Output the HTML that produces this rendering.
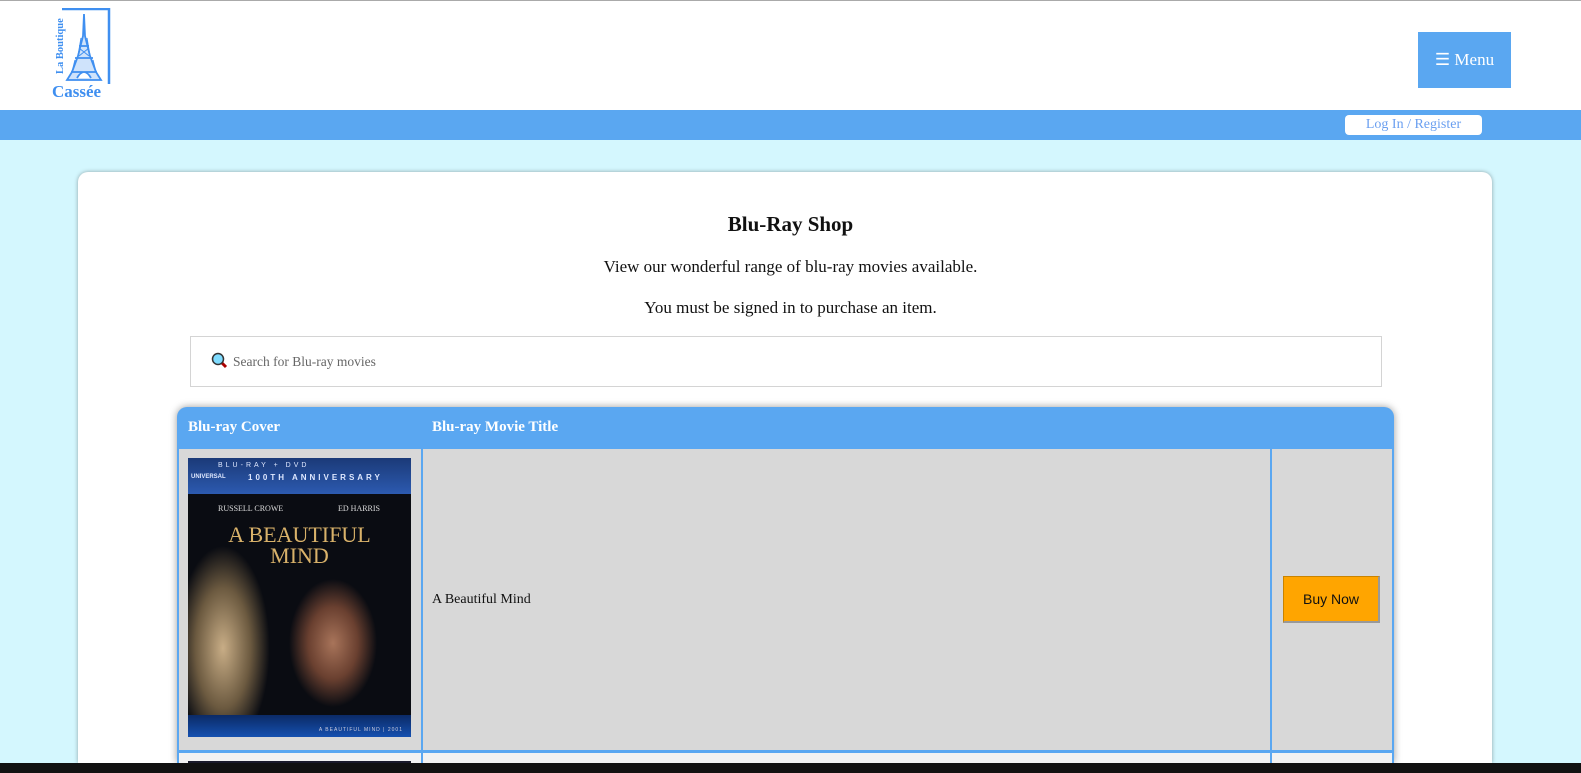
<!DOCTYPE html>
<html><head><meta charset="utf-8">
<style>
*{box-sizing:border-box;margin:0;padding:0}
html,body{width:1581px;height:773px;overflow:hidden}
body{background:#d4f7fe;font-family:"Liberation Serif",serif;position:relative}
.top{position:absolute;left:0;top:0;width:1581px;height:110px;background:#fff;border-top:1px solid #aaa}
.logo{position:absolute;left:50px;top:7px;width:62px;height:92px}
.menu{position:absolute;left:1418px;top:31px;width:93px;height:56px;background:#5aa7f1;color:#fff;font-size:17px;line-height:56px;text-align:center}
.bar{position:absolute;left:0;top:110px;width:1581px;height:30px;background:#5aa7f1}
.login{position:absolute;left:1345px;top:115px;width:137px;height:20px;background:#fff;border-radius:4px;color:#6a9ff0;font-size:14px;line-height:20px;text-align:center}
.card{position:absolute;left:78px;top:172px;width:1414px;height:591px;background:#fff;border-radius:10px 10px 0 0;box-shadow:0 0 4px rgba(0,0,0,.35)}
h1{position:absolute;left:0;width:100%;top:212px;text-align:center;font-size:21px;font-weight:bold;color:#111}
.p{position:absolute;left:0;width:100%;text-align:center;font-size:17px;color:#111}
.search{position:absolute;left:190px;top:336px;width:1192px;height:51px;border:1px solid #d4d4d4;background:#fff;font-size:13.5px;color:#666;line-height:49px;padding-left:42px}
.tbl{position:absolute;left:177px;top:407px;width:1217px;height:356px;border-radius:10px 10px 0 0;background:#5aa7f1;box-shadow:0 0 8px rgba(0,0,0,.4);overflow:hidden}
.th{position:absolute;top:12px;color:#fff;font-weight:bold;font-size:15px}
.cell{position:absolute;background:#d8d8d8}
.btn{position:absolute;left:1283px;top:576px;width:97px;height:47px;background:#ffa500;border:1px solid #c98300;border-right:2px solid #999;border-bottom:2px solid #999;font-family:"Liberation Sans",sans-serif;font-size:14px;line-height:45px;text-align:center;color:#111}
.poster{position:absolute;left:188px;top:458px;width:223px;height:279px;overflow:hidden;background:radial-gradient(ellipse 55px 80px at 145px 185px,#a8745a 0%,#6a4030 45%,transparent 80%),radial-gradient(ellipse 55px 120px at 35px 190px,#c8ad86 0%,#6c5a40 50%,transparent 85%),#0a0c12}
.ptop{position:absolute;left:0;top:0;width:100%;height:36px;background:linear-gradient(#1b3a78,#2c5ab0);color:#dfe8ff;font-family:"Liberation Sans",sans-serif;font-size:7px;letter-spacing:3px}
.pbot{position:absolute;left:0;bottom:0;width:100%;height:22px;background:linear-gradient(#0b2a66,#1550b0);color:#ccd;font-size:5px;text-align:right;padding:12px 8px 0 0;letter-spacing:1px;font-family:"Liberation Sans",sans-serif}
.black{position:absolute;left:0;top:763px;width:1581px;height:10px;background:#111}
</style></head><body>
<div class="top">
<svg class="logo" viewBox="0 0 62 92">
<polyline points="12,1 59,1 59,76" fill="none" stroke="#3f8ff0" stroke-width="2.5"/>
<text x="0" y="0" transform="translate(13,66) rotate(-90)" font-family="Liberation Serif" font-weight="bold" font-size="10.5" fill="#3f8ff0">La Boutique</text>
<path d="M34 6 L33 28 L28 48 L22 64 L17 72 L51 72 L46 64 L40 48 L35 28 Z M27 70 Q34 58 41 70 M25 50 L43 50 M29 38 L39 38 M21 64 L47 64" fill="rgba(63,143,240,0.25)" stroke="#3f8ff0" stroke-width="1.8"/>
<path d="M31 30 L28 48 M37 30 L40 48 M25 52 L22 64 M43 52 L46 64 M29 40 L39 48 M39 40 L29 48" stroke="#3f8ff0" stroke-width="1"/>
<text x="2" y="89" font-family="Liberation Serif" font-weight="bold" font-size="17" fill="#3f8ff0">Cassée</text>
</svg>
<div class="menu">☰ Menu</div>
</div>
<div class="bar"></div>
<div class="login">Log In / Register</div>
<div class="card"></div>
<h1>Blu-Ray Shop</h1>
<div class="p" style="top:257px">View our wonderful range of blu-ray movies available.</div>
<div class="p" style="top:298px">You must be signed in to purchase an item.</div>
<div class="search"><svg style="position:absolute;left:20px;top:15px" width="17" height="17" viewBox="0 0 17 17"><line x1="10" y1="10" x2="15" y2="15" stroke="#a00" stroke-width="3"/><circle cx="7" cy="7" r="5.5" fill="#7fdcff" stroke="#333" stroke-width="1.5"/></svg>Search for Blu-ray movies</div>
<div class="tbl">
<div class="th" style="left:11px">Blu-ray Cover</div>
<div class="th" style="left:255px">Blu-ray Movie Title</div>
<div class="cell" style="left:2px;top:42px;width:242px;height:301px"></div>
<div class="cell" style="left:246px;top:42px;width:847px;height:301px"></div>
<div class="cell" style="left:1095px;top:42px;width:120px;height:301px"></div>
<div class="cell" style="left:2px;top:346px;width:242px;height:10px;background:#f2f2f2"></div>
<div class="cell" style="left:246px;top:346px;width:847px;height:10px;background:#f2f2f2"></div>
<div class="cell" style="left:1095px;top:346px;width:120px;height:10px;background:#f2f2f2"></div>
<div style="position:absolute;left:255px;top:185px;font-size:14px;color:#111">A Beautiful Mind</div>
</div>
<div class="poster">
<div class="ptop"><div style="padding:4px 0 0 30px">BLU-RAY + DVD</div><div style="padding:4px 0 0 60px;font-size:8px;font-weight:bold">100TH ANNIVERSARY</div><div style="position:absolute;left:3px;top:16px;font-size:6px;letter-spacing:0;font-weight:bold">UNIVERSAL</div></div>
<div style="position:absolute;left:30px;top:46px;color:#ddd;font-size:8px">RUSSELL CROWE</div>
<div style="position:absolute;left:150px;top:46px;color:#ddd;font-size:8px">ED HARRIS</div>
<div style="position:absolute;left:0;width:100%;top:66px;text-align:center;color:#d9b26a;font-size:22px;line-height:21px">A BEAUTIFUL<br>MIND</div>
<div class="pbot">A BEAUTIFUL MIND | 2001</div>
</div>
<div class="btn">Buy Now</div>
<div style="position:absolute;left:188px;top:761px;width:223px;height:2px;background:#1a1a2a"></div>
<div class="black"></div>
</body></html>
